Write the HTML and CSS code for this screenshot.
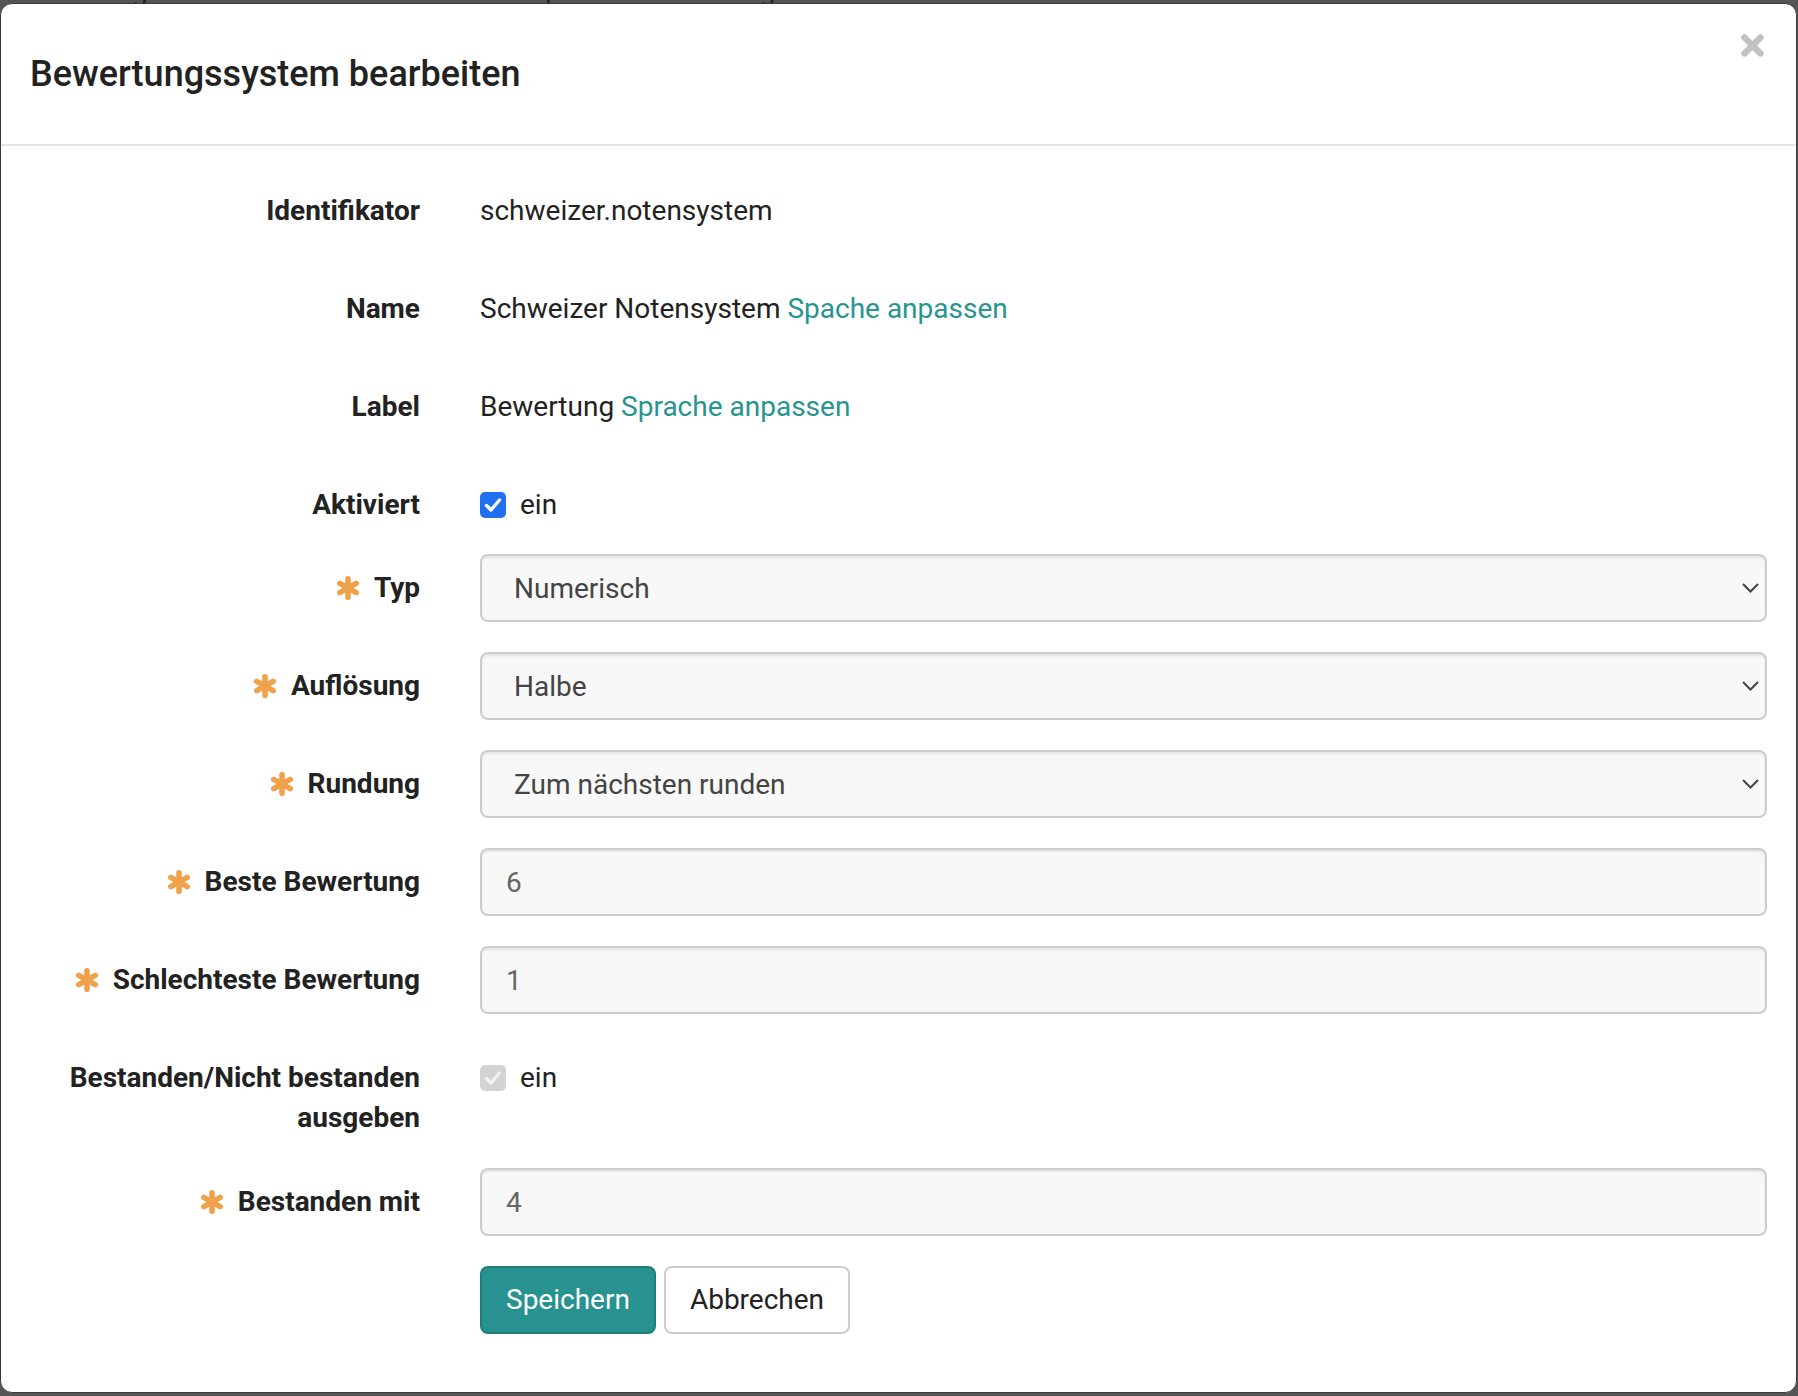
FILE: index.html
```html
<!DOCTYPE html>
<html lang="de">
<head>
<meta charset="utf-8">
<title>Bewertungssystem bearbeiten</title>
<link rel="stylesheet" href="styles.css">
</head>
<body>
<nav class="bg-nav">
  <span class="n1">Katalog</span>
  <span class="n2">Bibliothek</span>
  <span class="n3">Dokumentenpool</span>
  <span class="n4">Coaching</span>
  <span class="n5">Video Collection</span>
  <span class="n6">Administration</span>
  <span class="n7">Mehr</span>
</nav>

<div class="modal">
  <div class="modal-header">
    <h4 class="modal-title">Bewertungssystem bearbeiten</h4>
    <button class="close" type="button" aria-label="Schliessen">
      <svg width="25" height="25" viewBox="0 0 25 25"><path d="M4.5 4.5 L20.5 20.5 M20.5 4.5 L4.5 20.5" stroke="#c2c2c2" stroke-width="6.5" stroke-linecap="round" fill="none"/></svg>
    </button>
  </div>

  <form class="modal-body">
    <div class="row">
      <label class="lbl">Identifikator</label>
      <div class="static">schweizer.notensystem</div>
    </div>
    <div class="row">
      <label class="lbl">Name</label>
      <div class="static">Schweizer Notensystem <a class="link" href="#">Spache anpassen</a></div>
    </div>
    <div class="row">
      <label class="lbl">Label</label>
      <div class="static">Bewertung <a class="link" href="#">Sprache anpassen</a></div>
    </div>
    <div class="row row-check">
      <label class="lbl">Aktiviert</label>
      <div class="check">
        <span class="cb cb-on"><svg width="26" height="26" viewBox="0 0 26 26"><path d="M6.5 13.5 L11 18 L19.5 8" stroke="#fff" stroke-width="3.4" fill="none" stroke-linecap="round" stroke-linejoin="round"/></svg></span>
        <span class="cb-text">ein</span>
      </div>
    </div>
    <div class="row">
      <label class="lbl"><svg class="req" width="24" height="24" viewBox="-12 -12 24 24"><g stroke="#f0a24b" stroke-width="5.6" stroke-linecap="round"><line x1="0" y1="-9.2" x2="0" y2="9.2"/><line x1="-8.2" y1="-4.6" x2="8.2" y2="4.6"/><line x1="-8.2" y1="4.6" x2="8.2" y2="-4.6"/></g></svg>Typ</label>
      <div class="select-wrap">
        <select class="form-select"><option>Numerisch</option></select>
        <svg class="chev" width="17" height="10" viewBox="0 0 17 10"><path d="M1 1 L8.5 8.5 L16 1" stroke="#444" stroke-width="2" fill="none"/></svg>
      </div>
    </div>
    <div class="row">
      <label class="lbl"><svg class="req" width="24" height="24" viewBox="-12 -12 24 24"><g stroke="#f0a24b" stroke-width="5.6" stroke-linecap="round"><line x1="0" y1="-9.2" x2="0" y2="9.2"/><line x1="-8.2" y1="-4.6" x2="8.2" y2="4.6"/><line x1="-8.2" y1="4.6" x2="8.2" y2="-4.6"/></g></svg>Auflösung</label>
      <div class="select-wrap">
        <select class="form-select"><option>Halbe</option></select>
        <svg class="chev" width="17" height="10" viewBox="0 0 17 10"><path d="M1 1 L8.5 8.5 L16 1" stroke="#444" stroke-width="2" fill="none"/></svg>
      </div>
    </div>
    <div class="row">
      <label class="lbl"><svg class="req" width="24" height="24" viewBox="-12 -12 24 24"><g stroke="#f0a24b" stroke-width="5.6" stroke-linecap="round"><line x1="0" y1="-9.2" x2="0" y2="9.2"/><line x1="-8.2" y1="-4.6" x2="8.2" y2="4.6"/><line x1="-8.2" y1="4.6" x2="8.2" y2="-4.6"/></g></svg>Rundung</label>
      <div class="select-wrap">
        <select class="form-select"><option>Zum nächsten runden</option></select>
        <svg class="chev" width="17" height="10" viewBox="0 0 17 10"><path d="M1 1 L8.5 8.5 L16 1" stroke="#444" stroke-width="2" fill="none"/></svg>
      </div>
    </div>
    <div class="row">
      <label class="lbl"><svg class="req" width="24" height="24" viewBox="-12 -12 24 24"><g stroke="#f0a24b" stroke-width="5.6" stroke-linecap="round"><line x1="0" y1="-9.2" x2="0" y2="9.2"/><line x1="-8.2" y1="-4.6" x2="8.2" y2="4.6"/><line x1="-8.2" y1="4.6" x2="8.2" y2="-4.6"/></g></svg>Beste Bewertung</label>
      <input class="form-input" type="text" value="6">
    </div>
    <div class="row">
      <label class="lbl"><svg class="req" width="24" height="24" viewBox="-12 -12 24 24"><g stroke="#f0a24b" stroke-width="5.6" stroke-linecap="round"><line x1="0" y1="-9.2" x2="0" y2="9.2"/><line x1="-8.2" y1="-4.6" x2="8.2" y2="4.6"/><line x1="-8.2" y1="4.6" x2="8.2" y2="-4.6"/></g></svg>Schlechteste Bewertung</label>
      <input class="form-input" type="text" value="1">
    </div>
    <div class="row">
      <label class="lbl">Bestanden/Nicht bestanden ausgeben</label>
      <div class="check">
        <span class="cb cb-dis"><svg width="26" height="26" viewBox="0 0 26 26"><path d="M6.5 13.5 L11 18 L19.5 8" stroke="#f2f2f2" stroke-width="3.4" fill="none" stroke-linecap="round" stroke-linejoin="round"/></svg></span>
        <span class="cb-text">ein</span>
      </div>
    </div>
    <div class="row">
      <label class="lbl"><svg class="req" width="24" height="24" viewBox="-12 -12 24 24"><g stroke="#f0a24b" stroke-width="5.6" stroke-linecap="round"><line x1="0" y1="-9.2" x2="0" y2="9.2"/><line x1="-8.2" y1="-4.6" x2="8.2" y2="4.6"/><line x1="-8.2" y1="4.6" x2="8.2" y2="-4.6"/></g></svg>Bestanden mit</label>
      <input class="form-input" type="text" value="4">
    </div>
    <div class="row row-buttons">
      <div></div>
      <div class="buttons">
        <button class="btn btn-primary" type="button">Speichern</button>
        <button class="btn btn-default" type="button">Abbrechen</button>
      </div>
    </div>
  </form>
</div>
</body>
</html>
```

FILE: styles.css
```css
* { box-sizing: border-box; }

html, body {
  margin: 0;
  padding: 0;
}

body {
  width: 1798px;
  height: 1396px;
  background: #555555;
  overflow: hidden;
  position: relative;
  font-family: Roboto, "Liberation Sans", sans-serif;
  color: #222;
}

.bg-nav {
  display: flex;
  margin-top: -29px;
  height: 40px;
  font-size: 28px;
  line-height: 40px;
  color: #222;
  padding-left: 52px;
  gap: 58px;
}

.modal {
  position: absolute;
  left: 0;
  top: 3px;
  width: 1797px;
  height: 1390px;
  background: #fff;
  border: 1px solid #3a3a3a;
  border-radius: 12px;
  overflow: hidden;
}

.modal-header {
  display: flex;
  justify-content: space-between;
  align-items: flex-start;
  padding: 44px 29px 44px 29px;
  border-bottom: 2px solid #e5e5e5;
}

.modal-title {
  margin: 0;
  font-size: 36px;
  line-height: 52px;
  font-weight: 500;
  color: #222;
}

.close {
  margin-top: -15px;
  margin-right: 2px;
  padding: 0;
  border: 0;
  background: none;
  width: 25px;
  height: 25px;
  line-height: 0;
}

.modal-body {
  padding: 31px 29px 28px 30px;
  margin: 0;
}

.row {
  display: grid;
  grid-template-columns: 389px 1287px;
  column-gap: 60px;
  margin-bottom: 30px;
  font-size: 28px;
  line-height: 40px;
}

.row.row-check {
  margin-bottom: 29px;
}

.lbl {
  display: block;
  text-align: right;
  font-weight: 700;
  padding-top: 14px;
  color: #222;
}

.req {
  vertical-align: -3px;
  margin-right: 14px;
}

.static {
  padding: 14px 0;
  min-height: 68px;
  color: #222;
}

.link {
  color: #27958f;
  text-decoration: none;
}

.check {
  display: flex;
  align-items: center;
  padding-top: 14px;
  height: 54px;
}

.cb {
  display: inline-block;
  width: 26px;
  height: 26px;
  border-radius: 5px;
  line-height: 0;
  margin-right: 14px;
}

.cb-on { background: #1f6ff0; }
.cb-dis { background: #d3d3d3; }

.cb-text { color: #222; }

.select-wrap {
  position: relative;
}

.form-select,
.form-input {
  display: block;
  width: 100%;
  height: 68px;
  border: 2px solid #cccccc;
  border-radius: 8px;
  background: #f8f8f8;
  box-shadow: inset 0 2px 2px rgba(0, 0, 0, 0.075);
  font-family: Roboto, "Liberation Sans", sans-serif;
  font-size: 28px;
  outline: none;
  margin: 0;
}

.form-select {
  -webkit-appearance: none;
  appearance: none;
  padding: 0 40px 0 32px;
  color: #444;
}

.form-input {
  padding: 0 24px;
  color: #666;
}

.chev {
  position: absolute;
  right: 8px;
  top: 29px;
}

.row-buttons {
  margin-bottom: 30px;
}

.buttons {
  display: flex;
  gap: 8px;
}

.btn {
  height: 68px;
  padding: 0 24px;
  border-radius: 8px;
  font-family: Roboto, "Liberation Sans", sans-serif;
  font-size: 28px;
  line-height: 40px;
  border: 2px solid;
}

.btn-primary {
  background: #27928f;
  border-color: #1f7d7a;
  color: #fff;
}

.btn-default {
  background: #fff;
  border-color: #cccccc;
  color: #222;
}
```
